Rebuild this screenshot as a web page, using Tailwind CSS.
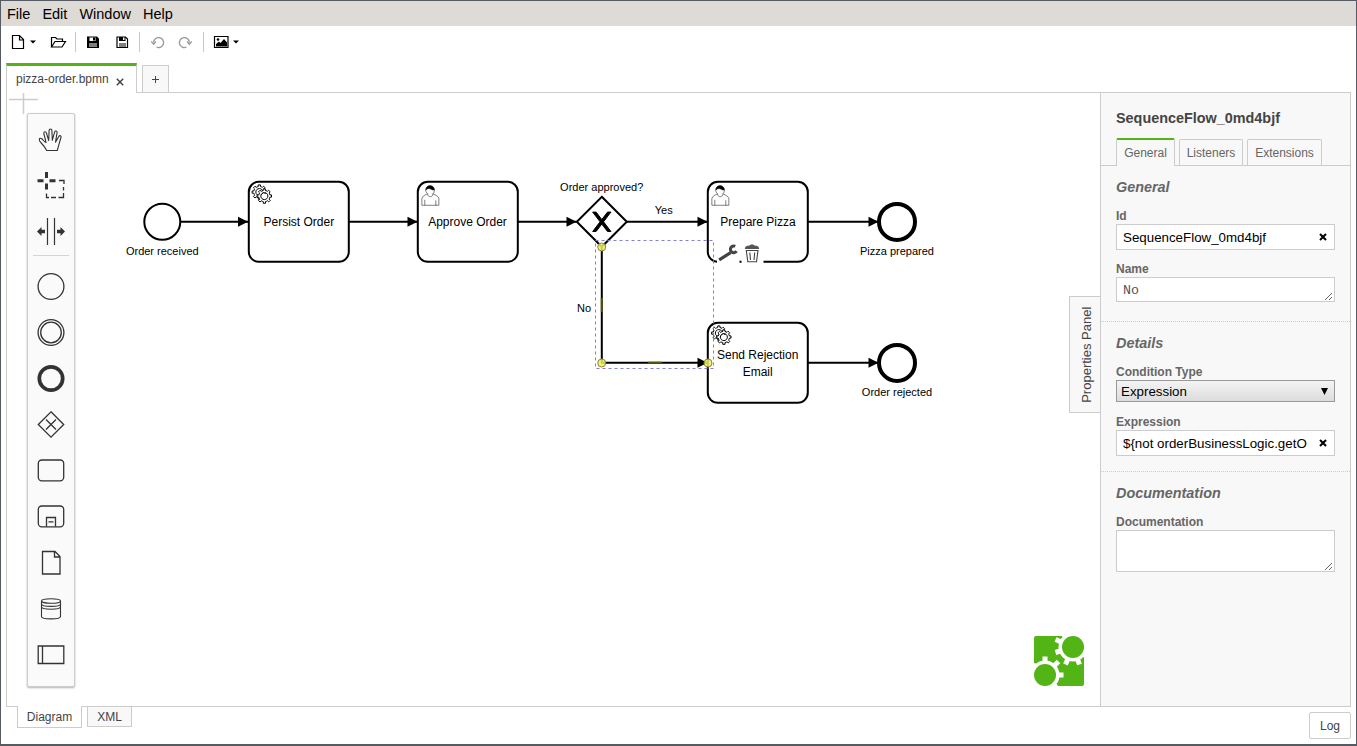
<!DOCTYPE html>
<html lang="en">
<head>
<meta charset="utf-8">
<title>Camunda Modeler</title>
<script src="https://cdn.jsdelivr.net/npm/@tailwindcss/browser@4"></script>
</head>
<body class="w-[1357px] h-[746px] overflow-hidden font-['Liberation_Sans',Arial,sans-serif] bg-white">
<div class="w-full h-full flex flex-col border border-b-2 border-[#565a63] text-[#444]">

  <!-- Menu bar -->
  <nav class="h-[25px] shrink-0 bg-[#dedad5] flex items-center gap-3 pl-[6px] pt-[2px] text-[14.5px] text-black">
    <span>File</span><span>Edit</span><span>Window</span><span>Help</span>
  </nav>

  <!-- Toolbar -->
  <div class="h-[37px] shrink-0 flex items-start pt-[6px] pl-[10px]">
    <svg width="240" height="20" viewBox="11 32 240 20" fill="none" stroke="#000">
      <path d="M12.500 35.500h7l4 4v9h-11z M19.500 35.500v4.500h4" stroke-width="1.200"/>
      <path d="M30 40.500h6l-3 3z" fill="#000" stroke="none"/>
      <path d="M51.500 47V37.500h4l1.500 1.500h5.500v2.500M51.500 47l3.500-5.500h10.500l-3.500 5.500z" stroke-width="1.200"/>
      <path d="M75.500 32v20M139.500 32v20M203.500 32v20" stroke="#c8c8c8"/>
      <path d="M87 36.500h10l2 2v9.500H87z" fill="#000" stroke="none"/>
      <path d="M89.500 37.500h6v3.500h-6zM89 43.500h8v1h-8zM89 45.500h8v1h-8z" fill="#fff" stroke="none"/>
      <path d="M93 37.500h2v3h-2z" fill="#000" stroke="none"/>
      <path d="M117 37h8.500l2 2v8.500H117z" stroke-width="1.200"/>
      <path d="M119 37h6.500v4H119zM119 43.500h7v1h-7zM119 45.500h7v1h-7z" fill="#000" stroke="none"/>
      <path d="M123 37.500h1.500v2.500h-1.500z" fill="#fff" stroke="none"/>
      <path d="M153.600 42.500a5 5 0 1 1 3 4.700M151.300 41.500l2.300 2.800 2.300-2.800" stroke="#999" stroke-width="1.300"/>
      <path d="M189.400 42.500a5 5 0 1 0-3 4.700M191.700 41.500l-2.300 2.800-2.300-2.800" stroke="#999" stroke-width="1.300"/>
      <path d="M214.500 36.500h13.500v11h-13.500z" stroke-width="1.200"/>
      <path d="M216 46.500v-2.500l3-2.500 1.500 1.500 3.500-4 3 3.500v4z" fill="#000" stroke="none"/><circle cx="218" cy="39.500" r="1.300" fill="#000" stroke="none"/>
      <path d="M233 40.500h6l-3 3z" fill="#000" stroke="none"/>
    </svg>
  </div>

  <!-- File tabs -->
  <div class="h-[30px] shrink-0 flex items-end pl-[5px] relative z-10 -mb-px">
    <div class="h-[30px] w-[131px] border-x border-[#ccc] border-t-3 border-t-[#52b415] bg-white flex items-center text-[12px] pl-[9px]">
      <span class="pb-[2px]">pizza-order.bpmn</span>
      <svg class="ml-[7px] mt-[5px]" width="8" height="8" viewBox="0 0 8 8" stroke="#444" stroke-width="1.500"><path d="M.8.8l6.400 6.400M7.200.8L.8 7.200"/></svg>
    </div>
    <div class="ml-[5px] w-[27px] h-[28px] border border-[#ccc] bg-[#f8f8f8] flex items-center justify-center">
      <svg width="7" height="7" stroke="#444"><path d="M3.500 0v7M0 3.500h7"/></svg>
    </div>
  </div>

  <!-- Editor -->
  <main class="h-[615px] shrink-0 mx-[5px] border border-[#ccc] flex relative">
    <div class="grow relative">
      <svg class="absolute left-0 top-0" width="1093" height="613" viewBox="7 93 1093 613" font-family="Liberation Sans, Arial, sans-serif">
        <defs>
          <marker id="arrow" viewBox="0 0 20 20" refX="11" refY="10" markerWidth="10" markerHeight="10" orient="auto"><path d="M1 5L11 10 1 15z"/></marker>
          <path id="gear" d="m0 0v-1.713c.352-.07.704-.178 1.048-.321.344-.145.666-.321.966-.521l1.194 1.180 1.567-1.577-1.195-1.180c.403-.614.683-1.299.825-2.018l1.622-.01v-2.220l-1.637.01c-.073-.352-.178-.700-.324-1.044-.145-.344-.321-.664-.523-.962l1.131-1.136-1.583-1.563-1.130 1.136c-.614-.401-1.303-.681-2.023-.822l.009-1.619h-2.241l.004 1.631c-.354.074-.705.180-1.050.324-.344.144-.665.321-.964.520l-1.170-1.158-1.567 1.579 1.168 1.157c-.403.613-.683 1.298-.825 2.017l-1.659.003v2.222l1.672-.006c.073.351.180.702.324 1.045.145.344.321.664.523.961l-1.199 1.197 1.584 1.560 1.196-1.193c.614.403 1.303.682 2.023.823l.001 1.699h2.227zm.221-3.996c-1.789.750-3.858-.093-4.610-1.874-.752-1.783.091-3.846 1.880-4.596 1.788-.749 3.857.093 4.609 1.874.752 1.782-.091 3.846-1.880 4.596z" fill="#fff" stroke="#000"/>
          <g id="gears"><use href="#gear" x="12" y="18"/><circle cx="16" cy="16.500" r="4" fill="#fff"/><use href="#gear" x="17" y="22"/></g>
          <g id="user" stroke="#000" stroke-width=".5" fill="#fff">
            <path d="m15 12c.909-.845 1.594-2.049 1.594-3.385 0-2.554-1.805-4.622-4.357-4.622-2.552 0-4.288 2.068-4.288 4.622 0 1.348.974 2.562 1.896 3.405-.529.187-5.669 2.097-5.794 4.756v6.718h17v-6.718c0-2.298-5.528-4.595-6.051-4.776zm-8 6v5.500m11 0v-5"/>
            <path d="m9.800 12.200c-.1 3.600 5.500 3.500 5.300-.1" />
            <path d="m8.100 8.200c0 0 2.251-2.358 4.274-1.177 2.024 1.181 4.221 1.537 4.124.965-.098-.57-.117-3.791-4.191-4.136-3.575.001-4.208 3.367-4.207 4.348z" fill="#000"/>
          </g>
        </defs>
        <path d="M23.500 93v21M9 99.500h29" stroke="#ccc" stroke-width="1.500" fill="none"/>
        <g fill="#fff" stroke="#000" stroke-width="2">
          <circle cx="162.300" cy="221.800" r="18"/>
          <rect x="248.800" y="181.800" width="100" height="80" rx="10"/>
          <rect x="417.800" y="181.800" width="100" height="80" rx="10"/>
          <rect x="707.800" y="181.800" width="100" height="80" rx="10"/>
          <rect x="707.800" y="322.800" width="100" height="80" rx="10"/>
          <path d="M601.800 196.800l25 25-25 25-25-25z"/>
          <circle cx="897" cy="221.900" r="18" stroke-width="4"/>
          <circle cx="897" cy="362.900" r="18" stroke-width="4"/>
        </g>
        <path transform="translate(576.660 197.090)" d="m16 15 7.429 9.714-7.429 9.714h3.429l5.714-7.464 5.714 7.464h3.429l-7.429-9.714 7.429-9.714h-3.429l-5.714 7.464-5.714-7.464z" stroke="#000"/>
        <g fill="none" stroke="#000" stroke-width="2">
          <path d="M180 221.800H248" marker-end="url(#arrow)"/>
          <path d="M349 221.800H417.500" marker-end="url(#arrow)"/>
          <path d="M518 221.800H576.500" marker-end="url(#arrow)"/>
          <path d="M627 221.800H707.500" marker-end="url(#arrow)"/>
          <path d="M808 221.800H878.500" marker-end="url(#arrow)"/>
          <path d="M601.800 247V362.800H707.500" marker-end="url(#arrow)"/>
          <path d="M808 362.800H878.500" marker-end="url(#arrow)"/>
        </g>
        <use href="#gears" x="248.500" y="181.300"/>
        <use href="#gears" x="708" y="322.300"/>
        <use href="#user" x="417.800" y="181.800"/>
        <use href="#user" x="707.800" y="181.800"/>
        <g font-size="12" text-anchor="middle" fill="#000">
          <text x="298.800" y="226">Persist Order</text>
          <text x="467.500" y="226">Approve Order</text>
          <text x="758" y="226">Prepare Pizza</text>
          <text x="757.700" y="359">Send Rejection</text>
          <text x="757.700" y="376">Email</text>
        </g>
        <g font-size="11" text-anchor="middle" fill="#000">
          <text x="162.300" y="255">Order received</text>
          <text x="601.700" y="191">Order approved?</text>
          <text x="663.700" y="214">Yes</text>
          <text x="584" y="312">No</text>
          <text x="897" y="255">Pizza prepared</text>
          <text x="897" y="396">Order rejected</text>
        </g>
        <rect x="595.500" y="240.500" width="118" height="128" fill="none" stroke="#7f7fd4" stroke-dasharray="3 3"/>
        <path d="M601.800 298v14M648 362.800h14" stroke="#55530a" stroke-width="2"/>
        <g fill="#eeee66" fill-opacity=".85" stroke="#8a8830"><circle cx="601.700" cy="247" r="4"/><circle cx="601.700" cy="363" r="4"/><circle cx="708" cy="363" r="4"/></g>
        <path d="M717 242h22.500v22H717zM741.500 242h22v22h-22z" fill="#fff"/>
        <path d="M719.200 259.800l11.500-7.200" stroke="#444" stroke-width="3.200" fill="none"/>
        <path d="M735.200 246.400a3.300 3.300 0 1 0 1.300 4.700" stroke="#444" stroke-width="3" fill="none"/>
        <path d="M744.800 249c.2-2.500 2-3.200 4.700-3.400.5-1.500 4.500-1.500 5 0 2.700.2 4.500.9 4.700 3.400z" fill="#555"/>
        <path d="M746.300 250.500h11.700l-1.500 11.200h-8.700zM749.800 252.500l.7 7.500M754.700 252.500l-.7 7.500" stroke="#444" stroke-width="1.100" fill="none"/>
      </svg>

      <!-- Tool palette over the canvas -->
      <div class="absolute left-5 top-5 w-12 h-[574px] pt-[2px] flex flex-col items-center rounded-[2px] border border-[#ccc] bg-[#fafafa] shadow-[0_1px_2px_rgba(0,0,0,.3)]">
        <svg class="shrink-0 size-[46px]" viewBox="28 116 46 46" fill="none" stroke="#333" stroke-width="1.100" stroke-linejoin="round"><path d="M46.700 150.500c-1.500-3-3-5-5.500-7.500-3.300-3.300-1.900-5.900.6-4.200 1.400 1 2 2.800 4.200 3.800-.4-3.600-2-7-2.200-9.200-.1-2 2.100-2.200 2.600-.4l2.300 7.500.4-10.200c.1-1.800 2.700-1.800 2.800 0l.4 10 2.300-8.200c.6-1.700 2.800-1.200 2.500.6l-1.600 9.500 3.300-5.800c.9-1.600 2.800-.6 2.200 1.100-1.400 4-2.500 9-3.700 13z"/></svg>
        <svg class="shrink-0 size-[46px]" viewBox="28 162 46 46" fill="none" stroke="#333"><path d="M46.500 172v6M46.500 183.500v6M37.500 180.700h6M49.500 180.700h6" stroke-width="3"/><path d="M59 180.500h5v3.500M63.500 187v3.500M63.500 193v4.500h-5M56 197.500h-5M49 197.500h-2.500v-4" stroke-width="1.300"/></svg>
        <svg class="shrink-0 size-[46px]" viewBox="28 208 46 46" fill="none" stroke="#333"><path d="M47.500 218v27M54.500 218v27" stroke-width="1.200"/><path d="M37 231.500l4.500-4.500v2.800h3.500v3.400h-3.500v2.800zM65 231.500l-4.500-4.500v2.800H57v3.400h3.500v2.800z" fill="#333" stroke="none"/></svg>
        <div class="shrink-0 w-9 h-px bg-[#d4d4d4] mt-px mb-[7px]"></div>
        <svg class="shrink-0 size-[46px]" viewBox="0 0 46 46" fill="none" stroke="#333"><circle cx="23" cy="23.500" r="12.900" stroke-width="1.300"/></svg>
        <svg class="shrink-0 size-[46px]" viewBox="0 0 46 46" fill="none" stroke="#333" stroke-width="1.300"><circle cx="23" cy="23.500" r="12.900"/><circle cx="23" cy="23.500" r="10.300"/></svg>
        <svg class="shrink-0 size-[46px]" viewBox="0 0 46 46" fill="none" stroke="#333"><circle cx="23" cy="23.500" r="11.700" stroke-width="3.700"/></svg>
        <svg class="shrink-0 size-[46px]" viewBox="0 0 46 46" fill="none" stroke="#333" stroke-width="1.300"><path d="M23 10.800l12.700 12.700L23 36.200 10.300 23.500zM18 18.500l10 10M28 18.500l-10 10"/></svg>
        <svg class="shrink-0 size-[46px]" viewBox="0 0 46 46" fill="none" stroke="#333" stroke-width="1.300"><rect x="10.300" y="13" width="25.400" height="20.800" rx="3.500"/></svg>
        <svg class="shrink-0 size-[46px]" viewBox="0 0 46 46" fill="none" stroke="#333" stroke-width="1.300"><rect x="10.300" y="13" width="25.400" height="20.800" rx="3.500"/><path d="M18.500 33.500v-9h9v9M20.500 28.800h5"/></svg>
        <svg class="shrink-0 size-[46px]" viewBox="0 0 46 46" fill="none" stroke="#333" stroke-width="1.300"><path d="M14.500 12.500h12.500l5 5v17.500h-17.500zM26.500 12.500v5.500h5.500"/></svg>
        <svg class="shrink-0 size-[46px]" viewBox="0 0 46 46" fill="none" stroke="#333" stroke-width="1.100"><ellipse cx="23" cy="16" rx="9.500" ry="2.300"/><path d="M13.500 16v15.500c0 3.200 19 3.200 19 0V16M13.500 19c0 3.200 19 3.200 19 0M13.500 21.800c0 3.200 19 3.200 19 0"/></svg>
        <svg class="shrink-0 size-[46px]" viewBox="0 0 46 46" fill="none" stroke="#333" stroke-width="1.300"><path d="M10.200 15h25.600v17.500H10.200zM14.500 15v17.500"/></svg>
      </div>

      <!-- Panel toggle -->
      <div class="absolute right-0 top-[203px] w-[31px] h-[117px] border border-r-0 border-[#ccc] bg-[#f8f8f8] flex items-center justify-center">
        <span class="-rotate-90 whitespace-nowrap text-[13px] text-[#444] ml-[4px]">Properties Panel</span>
      </div>

      <!-- bpmn.io mark -->
      <svg class="absolute left-[1027px] top-[543px]" width="50" height="50" viewBox="0 0 50 50">
        <rect width="50" height="50" rx="2" fill="#52b415"/>
        <g fill="#fff"><circle cx="39" cy="11" r="14.500"/><circle cx="11" cy="39" r="14.500"/><path d="M28 0h22v21H39zM0 27v23h24L11 30z"/></g>
        <g stroke="#fff" stroke-width="5"><path d="M39 11L21.500 3.500M39 11L21.500 16.500M39 11L31.500 28.500M39 11L45.500 28.500M11 39V20.500M11 39L24.500 25.500M11 39H29.500M11 39L24 45"/></g>
        <g fill="#52b415"><circle cx="39" cy="11" r="11"/><circle cx="11" cy="39" r="11"/></g>
      </svg>
    </div>

    <!-- Properties panel -->
    <aside class="w-[250px] shrink-0 border-l border-[#ccc] bg-[#f8f8f8] text-[#666]">
      <h1 class="pl-[15px] pt-[16px] h-[45px] text-[14.4px] leading-[18px] font-bold text-[#444]">SequenceFlow_0md4bjf</h1>
      <div class="h-[28px] flex items-end gap-1 pl-[15px] border-b border-[#ccc] text-[12px]">
        <div class="w-[59px] h-[28px] -mb-px border-x border-t-2 border-[#ccc] border-t-[#52b415] rounded-t-[2px] bg-[#f8f8f8] text-center leading-[26px]">General</div>
        <div class="w-[64px] h-[26px] border border-b-0 border-[#ccc] rounded-t-[2px] text-center leading-[26px]">Listeners</div>
        <div class="w-[75px] h-[26px] border border-b-0 border-[#ccc] rounded-t-[2px] text-center leading-[26px]">Extensions</div>
      </div>

      <section class="h-[156px] px-[15px] pt-[12px] border-b border-dotted border-[#ccc]">
        <h2 class="h-[31px] text-[14.4px] leading-[19px] font-bold italic">General</h2>
        <label class="block h-[15px] text-[12px] leading-[15px] font-bold">Id</label>
        <div class="h-[26px] flex items-center justify-between px-[6px] pr-[7px] border border-[#ccc] bg-white text-[13.33px] text-black"><span class="pt-[2px]">SequenceFlow_0md4bjf</span><svg width="8" height="8" stroke="#000" stroke-width="2"><path d="M1 1l6 6M7 1L1 7"/></svg></div>
        <label class="block mt-[11px] h-[16px] text-[12px] leading-[16px] font-bold">Name</label>
        <div class="h-[25px] flex items-center justify-between pl-[6px] border border-[#ccc] bg-white text-[13.33px] text-[#555] font-['Liberation_Mono',monospace]"><span class="pt-[2px]">No</span><svg class="self-end" width="10" height="9" stroke="#666"><path d="M1 8l7-7M5 8l3-3"/></svg></div>
      </section>

      <section class="h-[150px] px-[15px] pt-[12px] border-b border-dotted border-[#ccc]">
        <h2 class="h-[31px] text-[14.4px] leading-[19px] font-bold italic">Details</h2>
        <label class="block h-[15px] text-[12px] leading-[15px] font-bold">Condition Type</label>
        <div class="h-[22px] flex items-center justify-between pl-[4px] pr-[6px] border border-[#999] bg-linear-to-b from-[#f4f4f4] to-[#dcdcdc] text-[13.33px] text-black"><span class="pt-[2px]">Expression</span><svg width="7" height="7"><path d="M0 0h7L3.500 7z"/></svg></div>
        <label class="block mt-[12px] h-[16px] text-[12px] leading-[16px] font-bold">Expression</label>
        <div class="h-[26px] flex items-center justify-between px-[6px] pr-[7px] border border-[#ccc] bg-white text-[13.33px] text-black"><span class="w-[185px] pt-[2px] overflow-hidden whitespace-nowrap">${not orderBusinessLogic.getO</span><svg width="8" height="8" stroke="#000" stroke-width="2"><path d="M1 1l6 6M7 1L1 7"/></svg></div>
      </section>

      <section class="px-[15px] pt-[12px]">
        <h2 class="h-[31px] text-[14.4px] leading-[19px] font-bold italic">Documentation</h2>
        <label class="block h-[15px] text-[12px] leading-[15px] font-bold">Documentation</label>
        <div class="h-[42px] flex items-end justify-end border border-[#ccc] bg-white"><svg width="10" height="9" stroke="#666"><path d="M1 8l7-7M5 8l3-3"/></svg></div>
      </section>
    </aside>
  </main>

  <!-- Bottom bar -->
  <footer class="grow flex items-start justify-between pl-[16px] pr-[5px] text-[12px] relative">
    <div class="flex gap-[5px]">
      <div class="w-[65px] h-[22px] -mt-px border border-t-0 border-[#ccc] bg-white text-center leading-[22px]">Diagram</div>
      <div class="w-[45px] h-[21px] -mt-px border border-[#ccc] bg-[#f8f8f8] text-center leading-[20px]">XML</div>
    </div>
    <div class="mt-[5px] w-[42px] h-[27px] border border-[#ccc] rounded-[2px] text-center leading-[27px]">Log</div>
  </footer>
</div>
</body>
</html>
